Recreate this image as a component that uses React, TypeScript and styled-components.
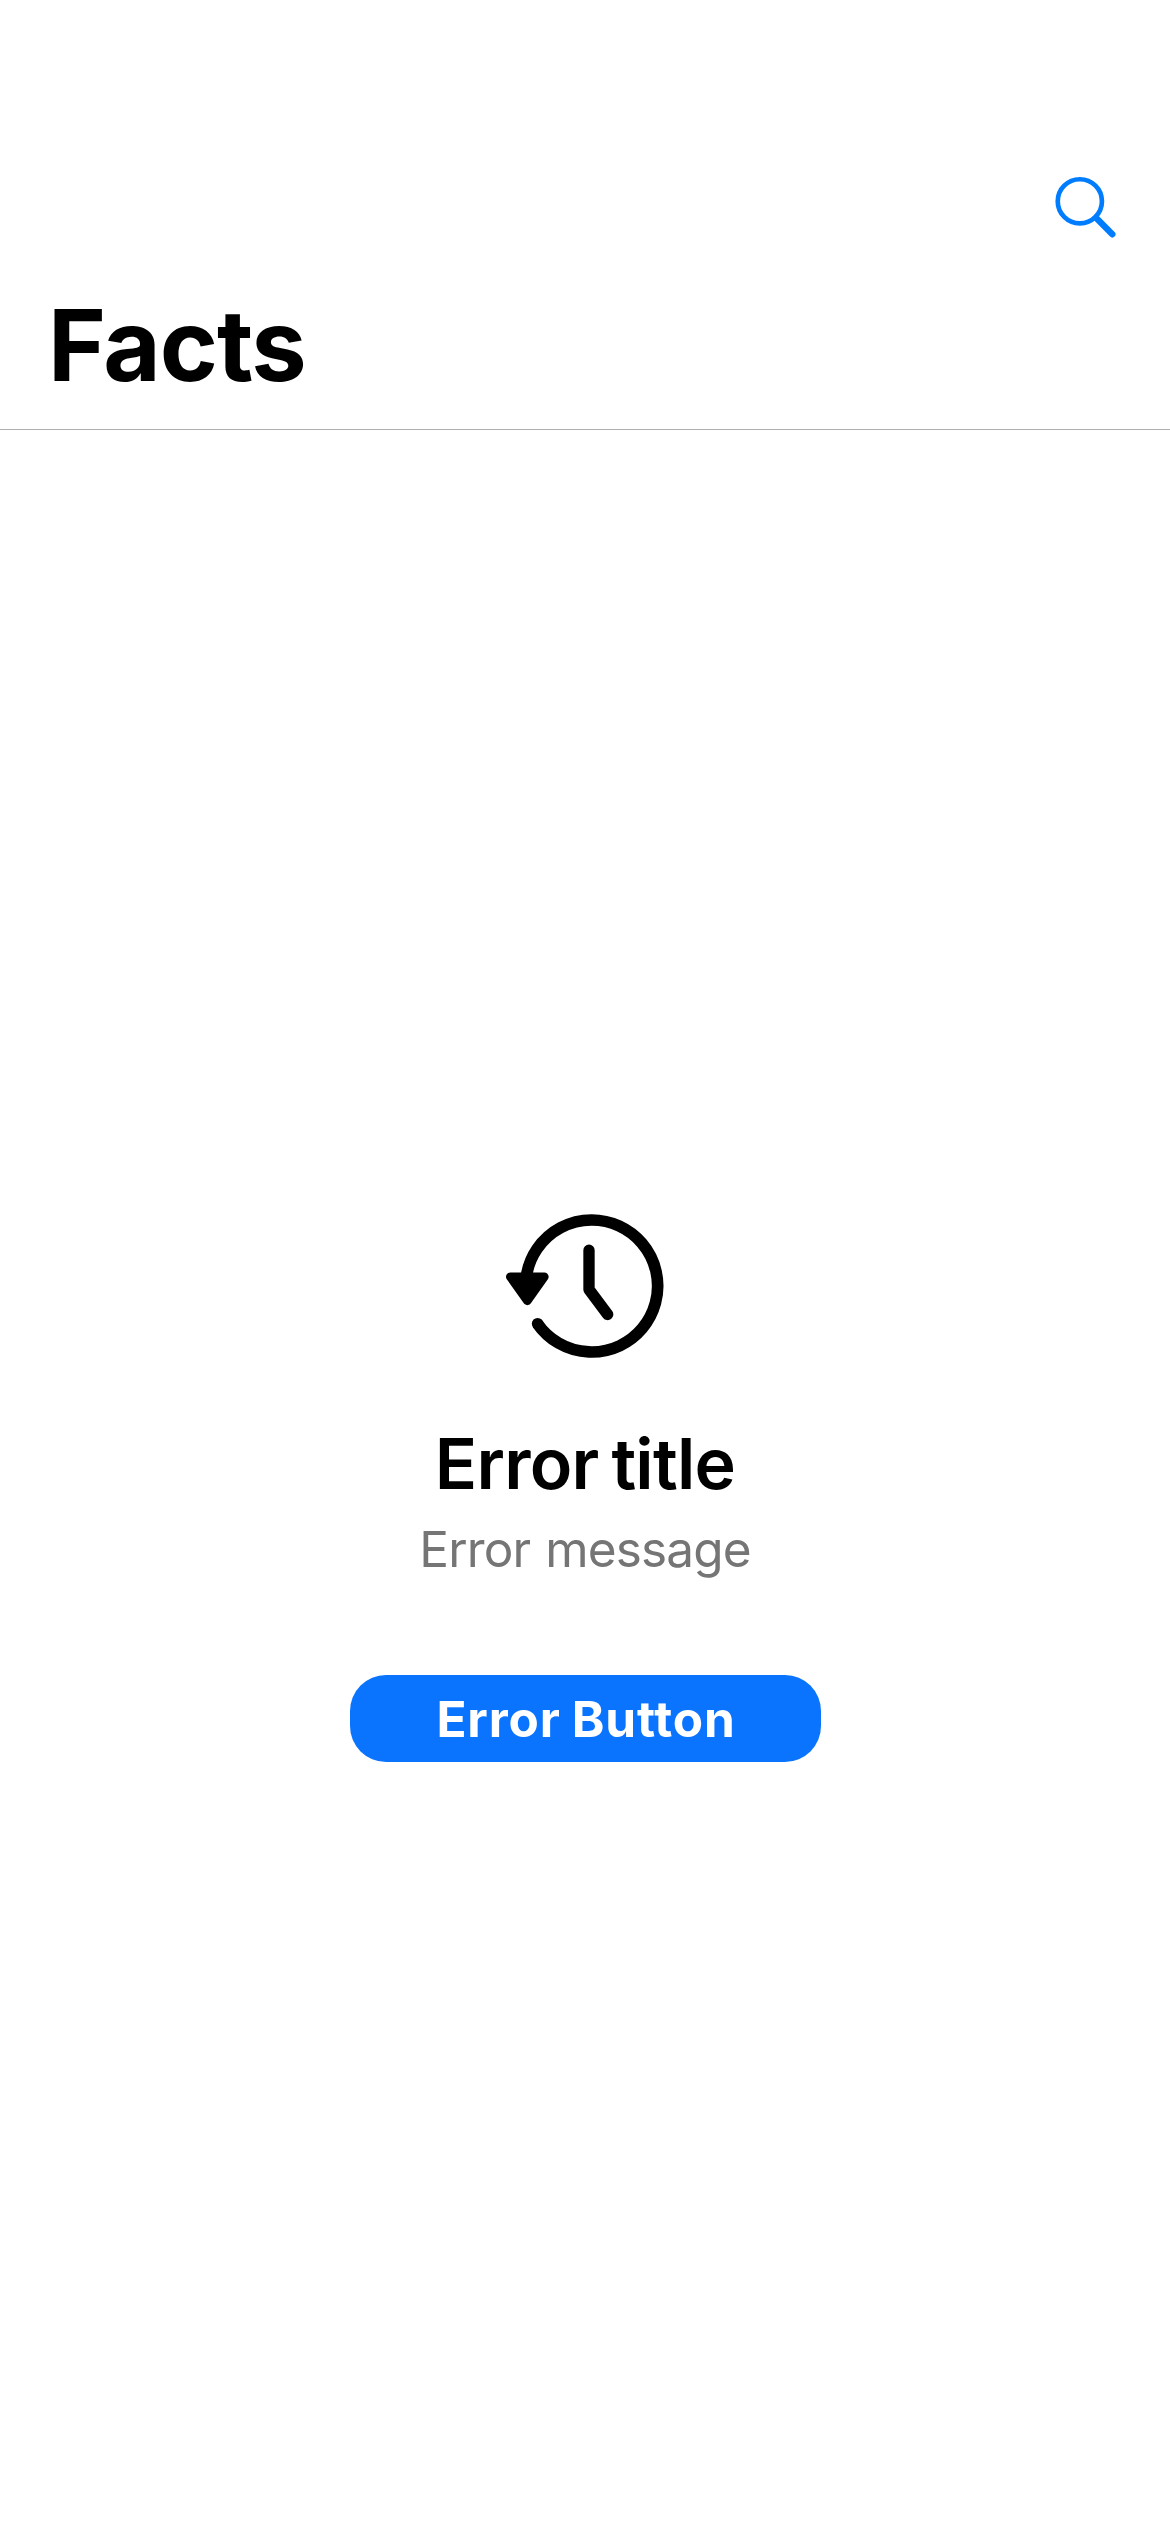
import React from 'react';
import styled, { createGlobalStyle } from 'styled-components';

const GlobalStyle = createGlobalStyle`
  *, *::before, *::after { box-sizing: border-box; }
  body {
    margin: 0;
    background: #fff;
    color: #000;
    font-family: Inter, 'Liberation Sans', sans-serif;
  }
`;

const Screen = styled.div`
  display: flex;
  flex-direction: column;
  width: 1170px;
  height: 2532px;
  background: #fff;
`;

const NavigationBar = styled.header`
  display: flex;
  flex-direction: column;
  flex: none;
  height: 430px;
  padding: 141px 48px 0;
  border-bottom: 1px solid #b0b0b1;
`;

const Toolbar = styled.div`
  display: flex;
  align-items: center;
  justify-content: flex-end;
  height: 132px;
`;

const IconButton = styled.button`
  display: flex;
  padding: 0 5px 0 0;
  border: 0;
  background: none;
  color: #007dff;
`;

const LargeTitle = styled.h1`
  margin: 12px 0 0;
  font-size: 99px;
  font-weight: 700;
  line-height: 120px;
  letter-spacing: -1.1px;
`;

const ErrorView = styled.main`
  display: flex;
  flex: 1;
  flex-direction: column;
  align-items: center;
  padding-top: 784px;
`;

const ErrorIcon = styled.svg`
  display: block;
  width: 158px;
  height: 144px;
`;

const ErrorTitle = styled.h2`
  margin: 63px 0 0;
  font-size: 70px;
  font-weight: 600;
  line-height: 86px;
  letter-spacing: -0.77px;
  word-spacing: -4px;
`;

const ErrorMessage = styled.p`
  margin: 12px 0 0;
  color: #757575;
  font-size: 49.5px;
  line-height: 60px;
  letter-spacing: -0.86px;
  word-spacing: 2px;
`;

const ErrorButton = styled.button`
  width: 471px;
  height: 87px;
  margin-top: 96px;
  padding: 2px 0 0 2px;
  border: 0;
  border-radius: 36px;
  background: #0a74ff;
  color: #fff;
  font-family: inherit;
  font-size: 49.5px;
  font-weight: 700;
  line-height: 85px;
  letter-spacing: 0.85px;
  word-spacing: -1.5px;
`;

const SearchGlyph = () => (
  <svg width="62" height="62" viewBox="0 -2 186 186" fill="none" stroke="currentColor">
    <circle cx="74.5" cy="74" r="66.3" strokeWidth="14" />
    <path d="M123 123L172 173" strokeWidth="19" strokeLinecap="round" />
  </svg>
);

const HistoryGlyph = () => (
  <ErrorIcon viewBox="33 42.5 474 432" fill="none" stroke="#000" strokeLinecap="round" strokeLinejoin="round">
    <path d="M94.7 226A198 198 0 1 1 127.7 371.9" strokeWidth="35" strokeLinecap="butt" />
    <circle cx="127.9" cy="371.7" r="17.5" fill="#000" stroke="none" />
    <path d="M46 231H148L97 303Z" fill="#000" strokeWidth="26" />
    <path d="M282 151V269L338 344" strokeWidth="34" />
  </ErrorIcon>
);

export default function App() {
  return (
    <Screen>
      <GlobalStyle />
      <NavigationBar>
        <Toolbar>
          <IconButton aria-label="Search">
            <SearchGlyph />
          </IconButton>
        </Toolbar>
        <LargeTitle>Facts</LargeTitle>
      </NavigationBar>
      <ErrorView>
        <HistoryGlyph />
        <ErrorTitle>Error title</ErrorTitle>
        <ErrorMessage>Error message</ErrorMessage>
        <ErrorButton>Error Button</ErrorButton>
      </ErrorView>
    </Screen>
  );
}
